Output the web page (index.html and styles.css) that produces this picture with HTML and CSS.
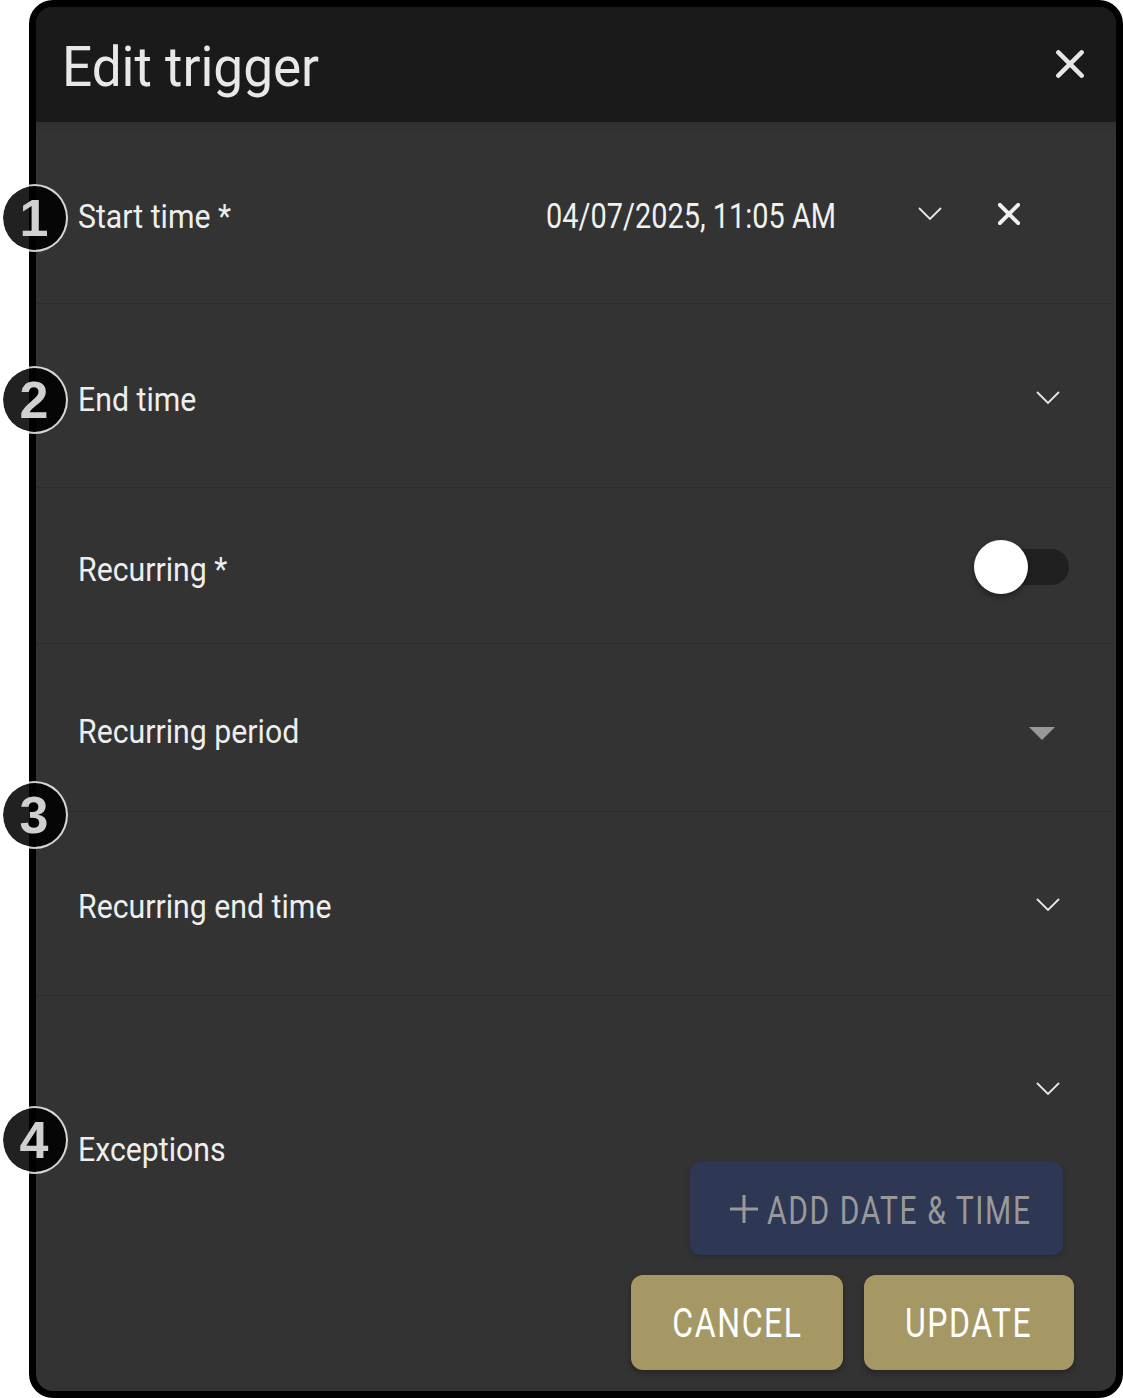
FILE: index.html
```html
<!DOCTYPE html>
<html lang="en">
<head>
<meta charset="utf-8">
<title>Edit trigger</title>
<link rel="stylesheet" href="styles.css">
</head>
<body>
<main class="dialog">
  <header class="dialog-head">
    <h1 class="dialog-title">Edit trigger</h1>
    <svg class="icon-close" viewBox="0 0 24 24"><path d="M2 2 22 22M22 2 2 22"/></svg>
  </header>
  <section class="dialog-body">
    <div class="row row-start">
      <span class="label">Start time *</span>
      <span class="date-value">04/07/2025, 11:05 AM</span>
      <svg class="chev chev-start" viewBox="0 0 24 14"><path d="M1 1 12 12 23 1"/></svg>
      <svg class="icon-clear" viewBox="0 0 24 24"><path d="M2 2 22 22M22 2 2 22"/></svg>
    </div>
    <div class="row row-end">
      <span class="label">End time</span>
      <svg class="chev" viewBox="0 0 24 14"><path d="M1 1 12 12 23 1"/></svg>
    </div>
    <div class="row row-recurring">
      <span class="label">Recurring *</span>
      <span class="switch"><span class="switch-thumb"></span></span>
    </div>
    <div class="row row-period">
      <span class="label">Recurring period</span>
      <span class="caret"></span>
    </div>
    <div class="row row-rend">
      <span class="label">Recurring end time</span>
      <svg class="chev" viewBox="0 0 24 14"><path d="M1 1 12 12 23 1"/></svg>
    </div>
    <div class="exceptions">
      <div class="exc-main">
        <span class="label exc-label">Exceptions</span>
        <div class="exc-side">
          <svg class="chev exc-chev" viewBox="0 0 24 14"><path d="M1 1 12 12 23 1"/></svg>
          <button class="btn-add" type="button"><svg class="plus" viewBox="0 0 30 30"><path d="M15 1V29M1 15H29"/></svg><span class="add-text">ADD DATE &amp; TIME</span></button>
        </div>
      </div>
      <div class="actions">
        <button class="btn-gold btn-cancel" type="button"><span class="gold-text">CANCEL</span></button>
        <button class="btn-gold btn-update" type="button"><span class="gold-text">UPDATE</span></button>
      </div>
    </div>
  </section>
  <span class="badge badge-1">1</span>
  <span class="badge badge-2">2</span>
  <span class="badge badge-3">3</span>
  <span class="badge badge-4">4</span>
</main>
</body>
</html>
```
FILE: styles.css
```css
* { box-sizing: border-box; }
html, body { margin: 0; padding: 0; background: #fff; }
body {
  width: 1123px;
  height: 1398px;
  overflow: hidden;
  font-family: "Roboto", "Liberation Sans", sans-serif;
}
.dialog {
  margin-left: 29px;
  width: 1094px;
  height: 1398px;
  border: 7px solid #000;
  border-radius: 24px;
  background: #333;
  display: flex;
  flex-direction: column;
}
.dialog-head {
  height: 115px;
  background: #1a1a1a;
  border-radius: 16px 16px 0 0;
  display: flex;
  align-items: center;
  justify-content: space-between;
  padding: 4px 32px 0 26px;
  flex: none;
  position: relative;
  box-shadow: 0 2px 8px rgba(0, 0, 0, .12);
}
.dialog-title {
  margin: 0;
  color: #e8e8e8;
  font-size: 56px;
  font-weight: 400;
  line-height: 1;
  transform: scaleX(.948);
  transform-origin: left center;
}
.icon-close { width: 28px; height: 28px; margin-top: -6px; }
.icon-close path { stroke: #e6e6e6; stroke-width: 3.8; stroke-linecap: round; fill: none; }
.dialog-body { flex: 1; display: flex; flex-direction: column; }
.row {
  display: flex;
  align-items: center;
  padding: 0 52px 0 42px;
  border-bottom: 1px solid #2c2c2c;
  margin-right: 4px;
  flex: none;
}
.row-start { height: 182px; }
.row-end { height: 184px; }
.row-recurring { height: 156px; }
.row-period { height: 168px; }
.row-rend { height: 184px; }
.label {
  display: inline-block;
  color: #eee;
  font-size: 34px;
  line-height: 1;
  white-space: nowrap;
  transform: scaleX(.89);
  transform-origin: left center;
}
.row .label { margin-top: 6px; }
.row-rend .label { margin-top: 4px; }
.date-value {
  color: #f0f0f0;
  font-size: 35px;
  margin-left: auto;
  margin-top: 8px;
  line-height: 1;
  white-space: nowrap;
  transform: scaleX(.826);
  transform-origin: right center;
}
.chev { width: 24px; height: 14px; margin-left: auto; margin-top: 4px; }
.chev path { stroke: #e6e6e6; stroke-width: 1.8; fill: none; }
.row-rend .chev { margin-top: 2px; }
.row .chev-start { margin-left: 82px; margin-top: 2px; }
.icon-clear { width: 22px; height: 22px; margin-left: 56px; margin-right: 40px; margin-top: 2px; }
.icon-clear path { stroke: #f0f0f0; stroke-width: 4.4; stroke-linecap: round; fill: none; }
.switch {
  margin-left: auto;
  margin-right: -9px;
  margin-top: 2px;
  width: 90px;
  height: 36px;
  background: #202020;
  border-radius: 18px;
  position: relative;
}
.switch-thumb {
  position: absolute;
  left: -5px;
  top: -9px;
  width: 54px;
  height: 54px;
  border-radius: 50%;
  background: #fff;
  box-shadow: 0 3px 6px rgba(0, 0, 0, .4);
}
.caret {
  margin-left: auto;
  margin-right: 5px;
  margin-top: 12px;
  width: 0;
  height: 0;
  border-left: 13px solid transparent;
  border-right: 13px solid transparent;
  border-top: 13px solid #999;
}
.exceptions { flex: 1; display: flex; flex-direction: column; padding-right: 42px; }
.exc-main { display: flex; justify-content: space-between; padding-left: 42px; }
.exc-label { margin-top: 136px; }
.exc-side { display: flex; flex-direction: column; align-items: flex-end; }
.exc-chev { margin: 86px 14px 0 0; }
.btn-add {
  margin-top: 66px;
  margin-right: 11px;
  width: 373px;
  height: 93px;
  background: #2e3754;
  border: 0;
  border-radius: 10px;
  color: #999;
  font: inherit;
  font-size: 38px;
  letter-spacing: 2px;
  display: flex;
  align-items: center;
  justify-content: flex-start;
  padding: 0 0 0 39px;
  box-shadow: 0 2px 5px rgba(0, 0, 0, .2);
}
.plus { width: 30px; height: 30px; flex: none; }
.plus path { stroke: #999; stroke-width: 3; fill: none; }
.add-text {
  flex: none;
  margin-left: 8px;
  margin-top: 4px;
  white-space: nowrap;
  transform: scaleX(.79);
  transform-origin: left center;
}
.actions { display: flex; justify-content: flex-end; gap: 21px; margin-top: 20px; }
.btn-gold {
  height: 95px;
  background: #a69865;
  border: 0;
  border-radius: 12px;
  color: #fff;
  font: inherit;
  font-size: 40px;
  letter-spacing: 2px;
  padding-top: 2px;
  box-shadow: 0 3px 6px rgba(0, 0, 0, .3);
}
.gold-text { display: inline-block; transform: scaleX(.8); }
.btn-cancel { width: 212px; }
.btn-update { width: 210px; }
.badge {
  position: absolute;
  left: 1px;
  width: 67px;
  height: 68px;
  border-radius: 50%;
  background: rgba(0, 0, 0, .87);
  background-clip: padding-box;
  border: 2px solid rgba(255, 255, 255, .8);
  color: #d0d0d0;
  font-family: "Liberation Sans", sans-serif;
  font-size: 52px;
  font-weight: 700;
  display: flex;
  align-items: center;
  justify-content: center;
  padding-right: 1px;
}
.badge-1 { top: 184px; }
.badge-2 { top: 366px; }
.badge-3 { top: 781px; }
.badge-4 { top: 1106px; }
```
